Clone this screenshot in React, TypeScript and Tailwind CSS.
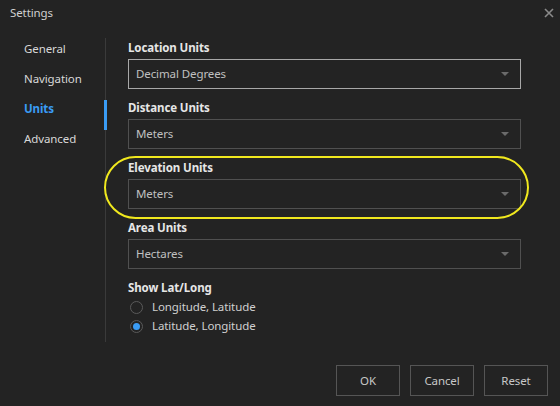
import { useState } from "react";

const units = [
  { label: "Location Units", value: "Decimal Degrees", focused: true },
  { label: "Distance Units", value: "Meters" },
  { label: "Elevation Units", value: "Meters", highlight: true },
  { label: "Area Units", value: "Hectares" },
];

function Dropdown({ value, focused }: { value: string; focused?: boolean }) {
  return (
    <div
      className={`mt-[4px] flex h-[30px] items-center justify-between border pl-[7px] pr-[11px] text-[11.5px] text-[#c0c0c0] ${
        focused ? "border-[#a8a8a8]" : "border-[#505050]"
      }`}
    >
      <span>{value}</span>
      <span className="h-0 w-0 border-x-[4px] border-t-[4px] border-x-transparent border-t-[#6a6a6a]" />
    </div>
  );
}

export default function App() {
  const [order, setOrder] = useState<"lonlat" | "latlon">("latlon");
  const nav = ["General", "Navigation", "Units", "Advanced"];

  return (
    <div
      className="flex h-[406px] w-[560px] flex-col bg-[#232323] tracking-[-0.1px] text-[#dcdcdc]"
      style={{ fontFamily: '"Noto Sans", "Open Sans", sans-serif' }}
    >
      {/* title bar */}
      <div className="flex h-[26px] items-center justify-between pl-[10px] pr-[5px] text-[11.5px] text-[#d0d0d0]">
        <span>Settings</span>
        <svg width="10" height="10" viewBox="0 0 10 10" className="mr-[1px]">
          <path d="M1 1 L9 9 M9 1 L1 9" stroke="#8a8a8a" strokeWidth="1.6" />
        </svg>
      </div>

      <div className="flex flex-1 pt-[12px]">
        {/* sidebar */}
        <div className="flex h-[304px] w-[106px] flex-col border-r border-[#3a3a3a] pt-[2px]">
          {nav.map((n) => (
            <div key={n} className="relative flex h-[30px] items-start pl-[24px] text-[11.5px] leading-[18px]">
              <span className={n === "Units" ? "font-bold text-[#3a9cf5]" : "text-[#d8d8d8]"}>{n}</span>
              {n === "Units" && <span className="absolute right-[-2px] top-0 h-[30px] w-[3px] bg-[#3a9cf5]" />}
            </div>
          ))}
        </div>

        {/* content */}
        <div className="flex w-[415px] flex-col pl-[22px] pt-[3px]">
          {units.map((u) => (
            <div key={u.label} className="relative">
              <div className="h-[14px] text-[11.5px] font-bold leading-[14px] text-[#e6e6e6]">{u.label}</div>
              <Dropdown value={u.value} focused={u.focused} />
              <div className="h-[12px]" />
              {u.highlight && (
                <div className="pointer-events-none absolute left-[-24px] top-[-5px] h-[63px] w-[425px] rounded-[34px] border-2 border-[#f0e81e]" />
              )}
            </div>
          ))}

          <div className="h-[14px] text-[11.5px] font-bold leading-[14px] text-[#e6e6e6]">Show Lat/Long</div>
          <div className="mt-[5px] flex flex-col gap-[5px] text-[11.5px] text-[#d0d0d0]">
            {[
              { id: "lonlat", label: "Longitude, Latitude" },
              { id: "latlon", label: "Latitude, Longitude" },
            ].map((o) => (
              <label
                key={o.id}
                className="flex h-[14px] cursor-pointer items-center gap-[9px] pl-[2px]"
                onClick={() => setOrder(o.id as "lonlat" | "latlon")}
              >
                <span className="flex h-[13px] w-[13px] items-center justify-center rounded-full border border-[#5a5a5a]">
                  {order === o.id && <span className="h-[7px] w-[7px] rounded-full bg-[#3a9cf5]" />}
                </span>
                {o.label}
              </label>
            ))}
          </div>
        </div>
      </div>

      {/* footer */}
      <div className="flex justify-end gap-[10px] pb-[10px] pr-[12px]">
        {["OK", "Cancel", "Reset"].map((b) => (
          <button
            key={b}
            className="h-[31px] w-[64px] border border-[#555] text-[11.5px] text-[#c8c8c8]"
          >
            {b}
          </button>
        ))}
      </div>
    </div>
  );
}
